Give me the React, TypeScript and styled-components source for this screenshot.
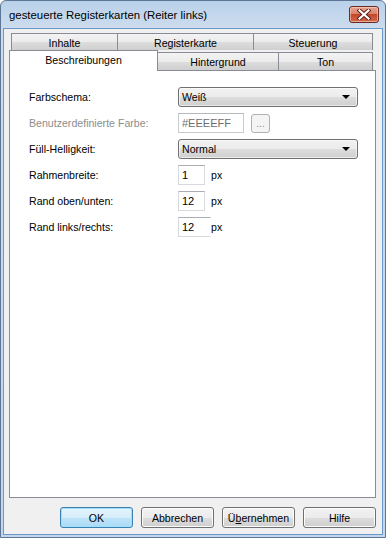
import React from "react";
import styled, { createGlobalStyle, css } from "styled-components";

const Global = createGlobalStyle`
  html, body { margin: 0; padding: 0; background: #ffffff; }
  body { font-family: "Liberation Sans", Arial, sans-serif; }
  * { box-sizing: border-box; }
`;

const Window = styled.div`
  width: 386px;
  height: 538px;
  display: flex;
  flex-direction: column;
  border: 1px solid #5d7596;
  border-radius: 6px 6px 0 0;
  background: linear-gradient(#b9d1ea 0px, #cddcee 27px, #c3d6ec 100%);
  padding: 0 2px 2px 2px;
  overflow: hidden;
`;

const TitleBar = styled.div`
  height: 27px;
  flex: none;
  display: flex;
  align-items: center;
  justify-content: space-between;
  padding: 0 4px 0 6px;
`;

const Title = styled.div`
  font-size: 11.4px;
  color: #000;
`;

const CloseButton = styled.div`
  width: 30px;
  height: 17px;
  border: 1px solid #6a2b22;
  border-radius: 3px;
  background: linear-gradient(#e8a594 0%, #db8269 45%, #c5472b 50%, #d26a4d 100%);
  box-shadow: inset 0 0 0 1px rgba(255, 220, 210, 0.55);
  display: flex;
  align-items: center;
  justify-content: center;
`;

const Client = styled.div`
  flex: 1;
  display: flex;
  flex-direction: column;
  background: #f0f0f0;
  border: 1px solid #6a98c8;
  padding: 4px 6px 6px 5px;
`;

const Tabs = styled.div`
  display: flex;
  flex-direction: column;
  flex: 1;
`;

const TabRow = styled.div<{ $back?: boolean }>`
  display: flex;
  align-items: flex-end;
  ${(p) =>
    p.$back
      ? css`
          height: 17px;
          padding-left: 2px;
        `
      : css`
          height: 20px;
        `}
`;

const Tab = styled.div<{ $w: number; $active?: boolean; $back?: boolean }>`
  width: ${(p) => p.$w}px;
  font-size: 10.6px;
  color: #000;
  display: flex;
  align-items: center;
  justify-content: center;
  border: 1px solid #898c95;
  border-bottom: none;
  margin-left: -1px;
  &:first-child { margin-left: 0; }
  ${(p) =>
    p.$active
      ? css`
          height: 21px;
          margin-bottom: -1px;
          background: #ffffff;
          position: relative;
          z-index: 2;
          padding-bottom: 3px;
        `
      : css`
          height: ${p.$back ? 17 : 18}px;
          background: linear-gradient(#f3f3f3 0%, #ebebeb 50%, #dddddd 51%, #cfcfcf 100%);
          padding-top: 1px;
        `}
`;

const Panel = styled.div`
  flex: 1;
  background: #ffffff;
  border: 1px solid #898c95;
  padding: 16px 0 0 19px;
  display: flex;
  flex-direction: column;
  gap: 6px;
`;

const Row = styled.div`
  display: grid;
  grid-template-columns: 149px auto;
  align-items: center;
  height: 20px;
`;

const Label = styled.div<{ $disabled?: boolean }>`
  font-size: 10.6px;
  color: ${(p) => (p.$disabled ? "#8d8d8d" : "#000")};
`;

const Controls = styled.div`
  display: flex;
  align-items: center;
`;

const Combo = styled.div`
  width: 180px;
  height: 20px;
  border: 1px solid #707070;
  border-radius: 3px;
  background: linear-gradient(#f2f2f2 0%, #ebebeb 50%, #dddddd 51%, #cfcfcf 100%);
  box-shadow: inset 0 0 0 1px rgba(255, 255, 255, 0.6);
  display: flex;
  align-items: center;
  justify-content: space-between;
  padding: 0 7px 0 3px;
  font-size: 10.6px;
  color: #000;
`;

const Arrow = styled.span`
  width: 0;
  height: 0;
  border-left: 4px solid transparent;
  border-right: 4px solid transparent;
  border-top: 4px solid #000;
`;

const TextBox = styled.div<{ $w: number; $disabled?: boolean; $open?: boolean }>`
  width: ${(p) => p.$w}px;
  height: 20px;
  background: #ffffff;
  border: 1px solid ${(p) => (p.$disabled ? "#c9cacd" : "#d6d9de")};
  border-top-color: ${(p) => (p.$disabled ? "#b6b8bc" : "#abadb3")};
  ${(p) => p.$open && css`border-right-color: transparent;`}
  font-size: 11px;
  color: ${(p) => (p.$disabled ? "#6d6d6d" : "#000")};
  display: flex;
  align-items: center;
  padding-left: 3px;
`;

const SmallButton = styled.div`
  width: 19px;
  height: 19px;
  margin-left: 7px;
  border: 1px solid #adb2b5;
  border-radius: 3px;
  background: #f4f4f4;
  font-size: 10px;
  color: #8f8f8f;
  display: flex;
  align-items: flex-end;
  justify-content: center;
  padding-bottom: 3px;
  line-height: 1;
`;

const Unit = styled.span`
  font-size: 10.6px;
  color: #000;
  margin-left: 6px;
`;

const ButtonBar = styled.div`
  display: flex;
  justify-content: flex-end;
  gap: 8px;
  margin-top: 9px;
  flex: none;
`;

const Button = styled.div<{ $default?: boolean }>`
  width: 73px;
  height: 21px;
  border-radius: 3px;
  font-size: 10.6px;
  color: #000;
  display: flex;
  align-items: center;
  justify-content: center;
  ${(p) =>
    p.$default
      ? css`
          border: 1px solid #3c7fb1;
          background: linear-gradient(#e5f4fc 0%, #d5edfa 50%, #bde4f9 51%, #abdbf5 100%);
          box-shadow: inset 0 0 0 1px #9fe0ff;
        `
      : css`
          border: 1px solid #707070;
          background: linear-gradient(#f2f2f2 0%, #ebebeb 50%, #dddddd 51%, #cfcfcf 100%);
          box-shadow: inset 0 0 0 1px #fcfcfc;
        `}
`;

const U = styled.span`
  text-decoration: underline;
`;

const CloseIcon = () => (
  <svg width="14" height="11" viewBox="0 0 14 11">
    <path d="M2.5 1.5 L11.5 9.5 M11.5 1.5 L2.5 9.5" stroke="#5a1d14" strokeWidth="4" strokeLinecap="square" />
    <path d="M2.5 1.5 L11.5 9.5 M11.5 1.5 L2.5 9.5" stroke="#ffffff" strokeWidth="2.2" strokeLinecap="square" />
  </svg>
);

export default function App() {
  return (
    <>
      <Global />
      <Window>
        <TitleBar>
          <Title>gesteuerte Registerkarten (Reiter links)</Title>
          <CloseButton>
            <CloseIcon />
          </CloseButton>
        </TitleBar>
        <Client>
          <Tabs>
            <TabRow $back>
              <Tab $back $w={107}>Inhalte</Tab>
              <Tab $back $w={137}>Registerkarte</Tab>
              <Tab $back $w={120}>Steuerung</Tab>
            </TabRow>
            <TabRow>
              <Tab $active $w={149}>Beschreibungen</Tab>
              <Tab $w={122}>Hintergrund</Tab>
              <Tab $w={95}>Ton</Tab>
            </TabRow>
            <Panel>
              <Row>
                <Label>Farbschema:</Label>
                <Controls>
                  <Combo>
                    <span>Weiß</span>
                    <Arrow />
                  </Combo>
                </Controls>
              </Row>
              <Row>
                <Label $disabled>Benutzerdefinierte Farbe:</Label>
                <Controls>
                  <TextBox $w={66} $disabled>#EEEEFF</TextBox>
                  <SmallButton>...</SmallButton>
                </Controls>
              </Row>
              <Row>
                <Label>Füll-Helligkeit:</Label>
                <Controls>
                  <Combo>
                    <span>Normal</span>
                    <Arrow />
                  </Combo>
                </Controls>
              </Row>
              <Row>
                <Label>Rahmenbreite:</Label>
                <Controls>
                  <TextBox $w={27}>1</TextBox>
                  <Unit>px</Unit>
                </Controls>
              </Row>
              <Row>
                <Label>Rand oben/unten:</Label>
                <Controls>
                  <TextBox $w={27}>12</TextBox>
                  <Unit>px</Unit>
                </Controls>
              </Row>
              <Row>
                <Label>Rand links/rechts:</Label>
                <Controls>
                  <TextBox $w={33} $open>12</TextBox>
                  <Unit style={{ marginLeft: 0 }}>px</Unit>
                </Controls>
              </Row>
            </Panel>
          </Tabs>
          <ButtonBar>
            <Button $default>OK</Button>
            <Button>Abbrechen</Button>
            <Button>
              Ü<U>b</U>ernehmen
            </Button>
            <Button>Hilfe</Button>
          </ButtonBar>
        </Client>
      </Window>
    </>
  );
}
